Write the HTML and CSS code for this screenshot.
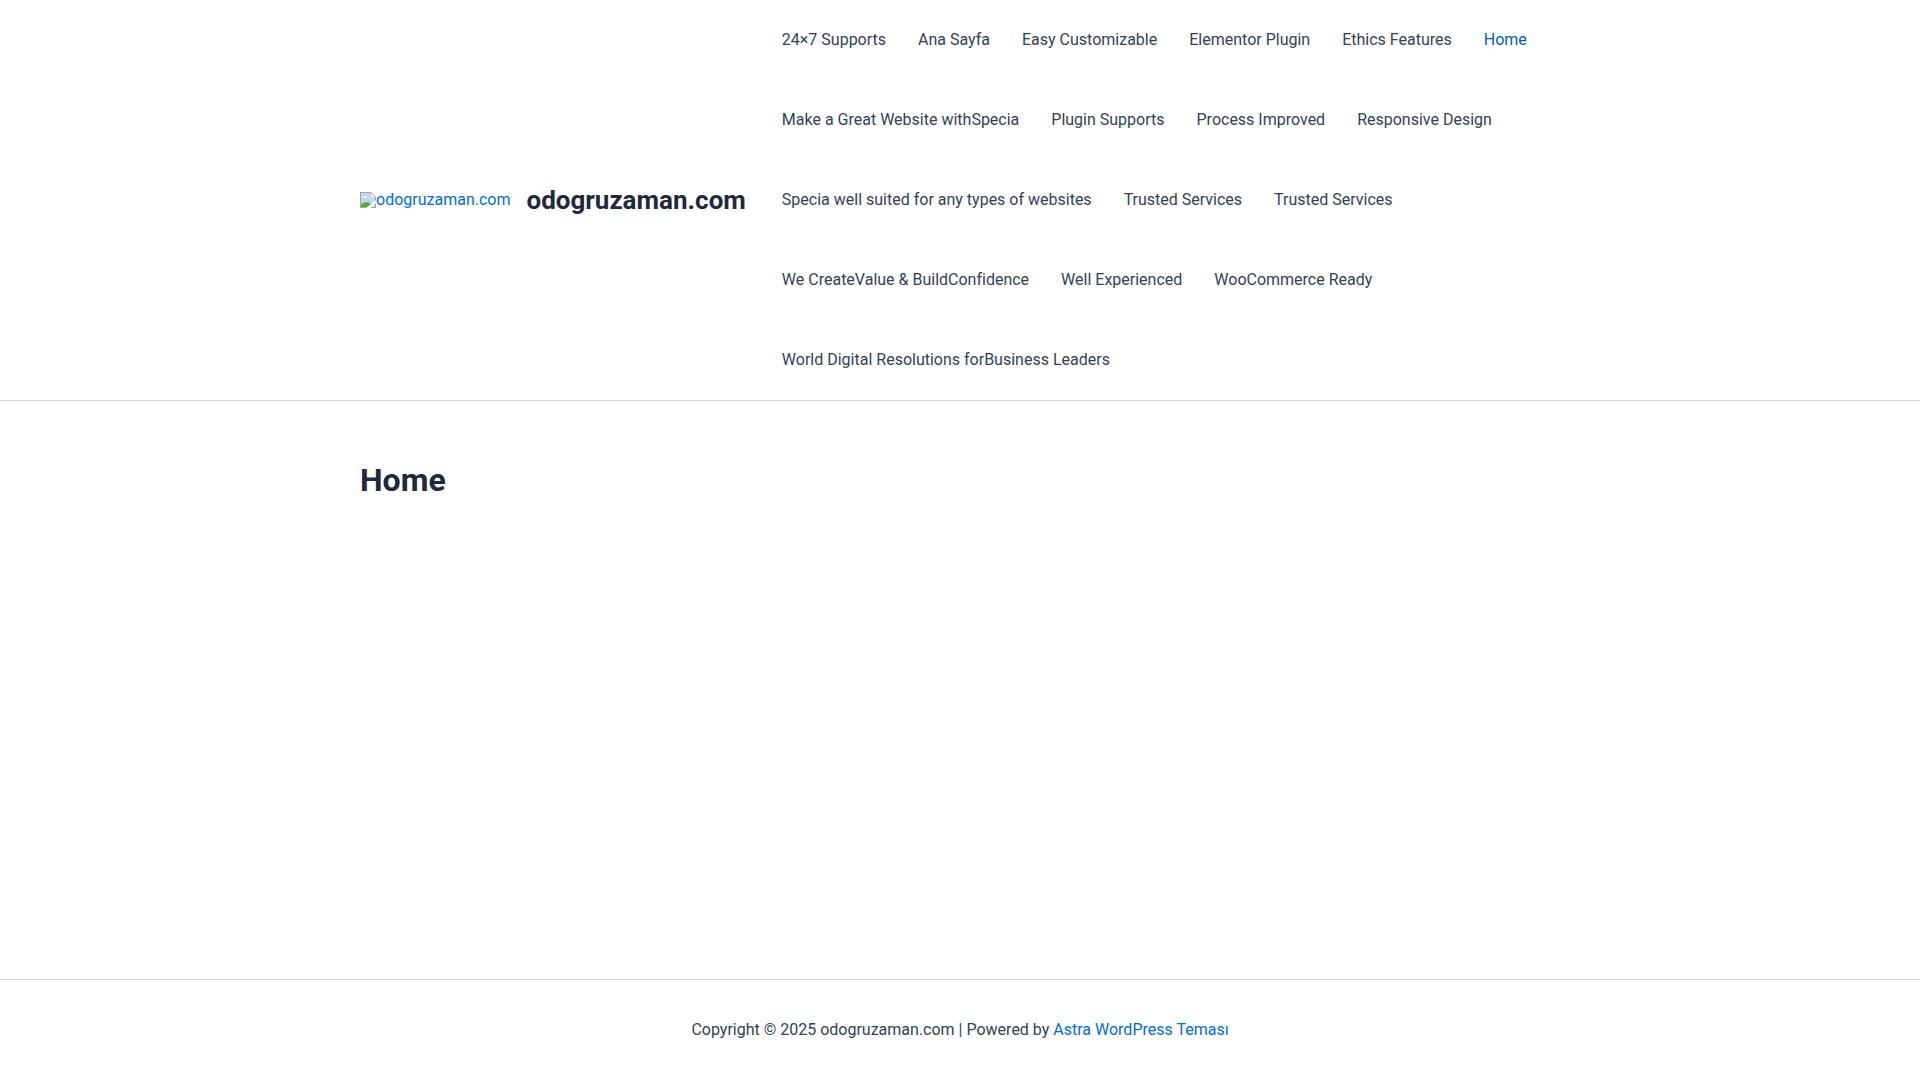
FILE: index.html
```html
<!DOCTYPE html>
<html lang="tr">

<head>
    <meta charset="UTF-8">
    <title>odogruzaman.com</title>
    <meta name="viewport" content="width=device-width, initial-scale=1.0">
    <link rel="stylesheet" href="styles.css">
</head>

<body>
    <header class="site-header">
        <div class="container header-inner">
            <div class="site-branding">
                <a href="#" class="custom-logo-link">
                    <svg class="logo-icon" width="16" height="16" viewBox="0 0 16 16" aria-hidden="true">
                        <path d="M0 0h11l5 5v11H0z" fill="#a3a3a3" />
                        <path d="M1 1h10v4h4v10H1z" fill="#c3d5f5" />
                        <path d="M3 6V5h1V4h2v1h1v1z" fill="#fff" />
                        <path d="M1 15v-2q2-3 5-3t5 2v3z" fill="#4fae35" />
                        <path d="M11 1l4 4h-4z" fill="#f4f4f4" />
                        <path d="M6 16l10-8v3l-5 5z" fill="#fff" />
                    </svg>
                    <span>odogruzaman.com</span>
                </a>
                <p class="site-title"><a href="#">odogruzaman.com</a></p>
            </div>

            <nav class="main-navigation">
                <ul class="menu">
                    <li><a href="#">24×7 Supports</a></li>
                    <li><a href="#">Ana Sayfa</a></li>
                    <li><a href="#">Easy Customizable</a></li>
                    <li><a href="#">Elementor Plugin</a></li>
                    <li><a href="#">Ethics Features</a></li>
                    <li><a href="#" class="current" aria-current="page">Home</a></li>
                    <li><a href="#">Make a Great Website withSpecia</a></li>
                    <li><a href="#">Plugin Supports</a></li>
                    <li><a href="#">Process Improved</a></li>
                    <li><a href="#">Responsive Design</a></li>
                    <li><a href="#">Specia well suited for any types of websites</a></li>
                    <li><a href="#">Trusted Services</a></li>
                    <li><a href="#">Trusted Services</a></li>
                    <li><a href="#">We CreateValue &amp; BuildConfidence</a></li>
                    <li><a href="#">Well Experienced</a></li>
                    <li><a href="#">WooCommerce Ready</a></li>
                    <li><a href="#">World Digital Resolutions forBusiness Leaders</a></li>
                </ul>
            </nav>
        </div>
    </header>

    <main class="site-content">
        <div class="container">
            <h1 class="entry-title">Home</h1>
        </div>
    </main>

    <footer class="site-footer">
        <div class="container">
            <p>Copyright © 2025 odogruzaman.com | Powered by <a href="#">Astra WordPress Teması</a></p>
        </div>
    </footer>
</body>

</html>
```

FILE: styles.css
```css
* {
    box-sizing: border-box;
}

body {
    display: flex;
    flex-direction: column;
    min-height: 100vh;
    margin: 0;
    font-family: Roboto, sans-serif;
    font-size: 16px;
    line-height: 26px;
    color: #334155;
    background: #fff;
}

a {
    color: #046bd2;
    text-decoration: none;
}

a:hover {
    color: #045cb4;
}

.container {
    width: 100%;
    max-width: 1240px;
    margin: 0 auto;
    padding: 0 20px;
}

/* Header */
.site-header {
    border-bottom: 1px solid #d1d5db;
}

.header-inner {
    display: flex;
    align-items: center;
    gap: 20px;
}

.site-branding {
    display: flex;
    align-items: center;
    gap: 16px;
}

.custom-logo-link {
    display: flex;
    align-items: center;
}

.site-title {
    margin: 0;
    font-size: 26px;
    font-weight: 700;
    line-height: 32px;
}

.site-title a {
    color: #1e293b;
}

.main-navigation {
    flex: 1;
}

.menu {
    display: flex;
    flex-wrap: wrap;
    margin: 0;
    padding: 0;
    list-style: none;
}

.menu a {
    display: block;
    padding: 0 16px;
    line-height: 80px;
    color: #334155;
}

.menu a:hover,
.menu .current {
    color: #045cb4;
}

/* Content */
.site-content {
    flex: 1;
    padding: 60px 0;
}

.entry-title {
    margin: 0;
    font-size: 32px;
    font-weight: 700;
    line-height: 38px;
    color: #1e293b;
}

/* Footer */
.site-footer {
    padding: 37px 0;
    border-top: 1px solid #d1d5db;
    text-align: center;
}

.site-footer p {
    margin: 0;
}
```
